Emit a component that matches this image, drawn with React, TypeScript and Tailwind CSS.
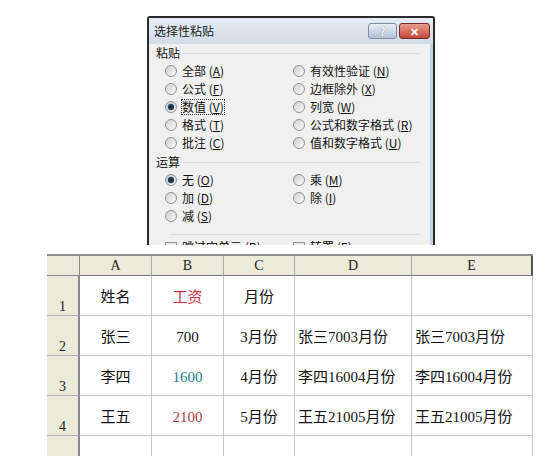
import React from 'react';

const dlgFont = { fontFamily: '"Noto Sans CJK SC", "Liberation Sans", sans-serif' };
const cellFont = { fontFamily: '"Liberation Serif", "Noto Sans CJK SC", serif' };

function Radio({ checked }: { checked?: boolean }) {
  return (
    <span className="flex h-[12px] w-[12px] shrink-0 items-center justify-center rounded-full border border-[#8f9294] bg-linear-to-br from-[#cfd1d3] to-[#fafafa]">
      {checked && <span className="h-[6px] w-[6px] rounded-full bg-[#1d3347] shadow-[0_0_2px_#5a86b0]" />}
    </span>
  );
}

function Option({ label, k, checked, focus }: { label: string; k: string; checked?: boolean; focus?: boolean }) {
  return (
    <div className="flex h-[18px] items-center gap-[5px]">
      <Radio checked={checked} />
      <span className={`text-[12px] leading-[14px] text-[#111] ${focus ? 'outline outline-1 outline-dotted outline-[#333]' : ''}`}>
        {label} (<span className="underline">{k}</span>)
      </span>
    </div>
  );
}

function Section({ title }: { title: string }) {
  return (
    <div className="flex h-[18px] items-center gap-[3px] pl-[7px] pr-[9px]">
      <span className="text-[12px] leading-[14px] text-[#111]">{title}</span>
      <span className="h-px flex-1 bg-[#d5dfe5]" />
    </div>
  );
}

function Dialog() {
  return (
    <div
      className="ml-[147px] mt-[16px] h-[229px] w-[288px] overflow-hidden rounded-t-[3px] border-x-2 border-t-2 border-[#2a2a2a] bg-[#f0f0f0]"
      style={dlgFont}
    >
      {/* title bar */}
      <div className="flex h-[26px] items-center justify-between bg-linear-to-b from-[#e4ebf3] to-[#d3dce7] pl-[5px] pr-[3px]">
        <span className="text-[12px] text-[#1a1a1a]">选择性粘贴</span>
        <div className="flex items-center gap-[2px]">
          <div className="flex h-[16px] w-[29px] items-center justify-center rounded-[3px] border border-[#7b8da3] bg-linear-to-b from-[#e8eef5] to-[#b3c3d5] text-[11px] font-bold leading-none text-white [text-shadow:0_0_1px_#3d5a7a]">
            ?
          </div>
          <div className="flex h-[16px] w-[31px] items-center justify-center rounded-[3px] border border-[#7a2a22] bg-linear-to-b from-[#e89b8d] to-[#c4453a] text-[11px] font-bold leading-none text-white">
            ✕
          </div>
        </div>
      </div>
      <div className="border-r-[3px] border-[#bfd2e6]">
        <Section title="粘贴" />
        <div className="grid grid-cols-[128px_1fr] pl-[16px]">
          <Option label="全部" k="A" />
          <Option label="有效性验证" k="N" />
          <Option label="公式" k="F" />
          <Option label="边框除外" k="X" />
          <Option label="数值" k="V" checked focus />
          <Option label="列宽" k="W" />
          <Option label="格式" k="T" />
          <Option label="公式和数字格式" k="R" />
          <Option label="批注" k="C" />
          <Option label="值和数字格式" k="U" />
        </div>
        <div className="h-px" />
        <Section title="运算" />
        <div className="grid grid-cols-[128px_1fr] pl-[16px]">
          <Option label="无" k="O" checked />
          <Option label="乘" k="M" />
          <Option label="加" k="D" />
          <Option label="除" k="I" />
          <Option label="减" k="S" />
        </div>
        <div className="ml-[21px] mr-[9px] mt-[9px] h-px bg-[#d5dfe5]" />
        <div className="grid grid-cols-[128px_1fr] pl-[16px] pt-[5px]">
          <div className="flex items-start gap-[5px]">
            <span className="mt-[2px] h-[12px] w-[12px] border border-[#8f9294] bg-[#e9e9e9]" />
            <span className="text-[12px] leading-[14px]">跳过空单元 (B)</span>
          </div>
          <div className="flex items-start gap-[5px]">
            <span className="mt-[2px] h-[12px] w-[12px] border border-[#8f9294] bg-[#e9e9e9]" />
            <span className="text-[12px] leading-[14px]">转置 (E)</span>
          </div>
        </div>
      </div>
    </div>
  );
}

type Cell = { text?: string; color?: string; left?: boolean };

const rows: Cell[][] = [
  [{ text: '姓名' }, { text: '工资', color: '#c8323c' }, { text: '月份' }, {}, {}],
  [{ text: '张三' }, { text: '700' }, { text: '3月份' }, { text: '张三7003月份', left: true }, { text: '张三7003月份', left: true }],
  [{ text: '李四' }, { text: '1600', color: '#2a7a8c' }, { text: '4月份' }, { text: '李四16004月份', left: true }, { text: '李四16004月份', left: true }],
  [{ text: '王五' }, { text: '2100', color: '#a83a48' }, { text: '5月份' }, { text: '王五21005月份', left: true }, { text: '王五21005月份', left: true }],
];

function Sheet() {
  const cols = ['A', 'B', 'C', 'D', 'E'];
  return (
    <div
      className="ml-[47px] mt-[9px] grid w-[486px] grid-cols-[33px_72px_72px_71px_117px_121px] grid-rows-[20px_40px_40px_40px_40px_21px] border-t-2 border-[#8e8e8e]"
      style={cellFont}
    >
      <div className="border-b border-r border-[#8a8a8a] bg-[#ecebd9]" />
      {cols.map((c, i) => (
        <div
          key={c}
          className={`flex items-center justify-center border-b border-[#7d7d7d] bg-[#ecebd9] text-[14px] text-[#222] ${i === 4 ? 'border-r-2 border-r-[#555]' : 'border-r border-r-[#a9a9a9]'}`}
        >
          {c}
        </div>
      ))}
      {rows.map((r, ri) => (
        <React.Fragment key={ri}>
          <div className="flex items-end justify-center border-b border-r-2 border-b-[#b0b0b0] border-r-[#8a8a8a] bg-[#ecebd9] text-[14px] leading-[17px] text-[#222]">
            {ri + 1}
          </div>
          {r.map((c, ci) => (
            <div
              key={ci}
              className={`flex items-center border-b border-r border-[#c6c6c6] pt-[4px] text-[15px] text-[#111] ${c.left ? 'justify-start pl-[3px]' : 'justify-center'}`}
              style={c.color ? { color: c.color } : undefined}
            >
              {c.text}
            </div>
          ))}
        </React.Fragment>
      ))}
      <div className="border-r-2 border-[#8a8a8a] bg-[#ecebd9]" />
      {cols.map((c) => (
        <div key={c} className="border-r border-[#c6c6c6]" />
      ))}
    </div>
  );
}

export default function App() {
  return (
    <div className="h-[456px] w-[551px] overflow-hidden bg-white">
      <Dialog />
      <Sheet />
    </div>
  );
}
